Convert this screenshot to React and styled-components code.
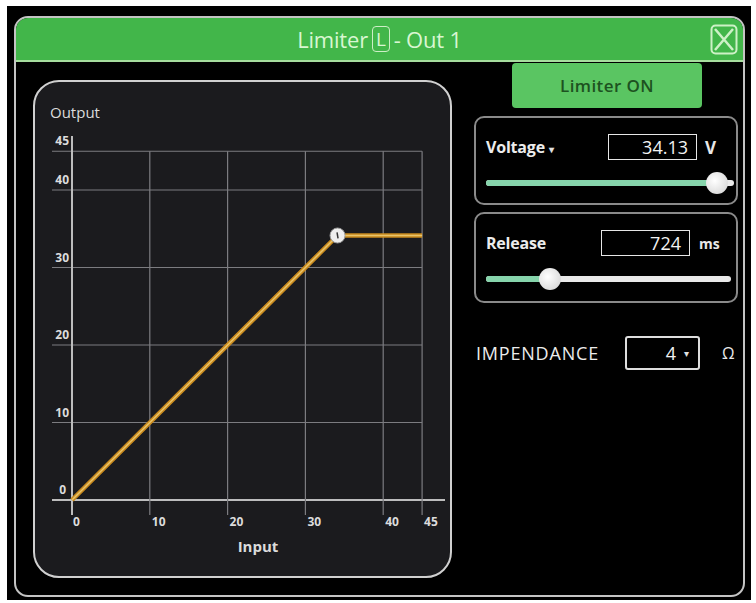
import React from "react";
import styled, { createGlobalStyle } from "styled-components";

const GlobalStyle = createGlobalStyle`
	body {
		margin: 0;
		background: #ffffff;
		font-family: "Open Sans", "Noto Sans", sans-serif;
	}
`;

const Frame = styled.div`
	margin: 6px 5px 3px 7px;
	width: 744px;
	height: 594px;
	box-sizing: border-box;
	padding: 10px 6px 3px 7px;
	background: #000;
`;

const Window = styled.div`
	width: 731px;
	height: 581px;
	box-sizing: border-box;
	border: 2px solid #c4c4c4;
	border-radius: 14px;
	overflow: hidden;
	background: #000;
	display: flex;
	flex-direction: column;
`;

const TitleBar = styled.div`
	height: 42px;
	flex-shrink: 0;
	background: #42b64a;
	border-bottom: 2px solid #a6dd9e;
	display: flex;
	align-items: center;
	justify-content: center;
	position: relative;
	color: #d9f6d2;
	font-size: 22px;
	letter-spacing: -0.2px;
`;

const KeyBox = styled.span`
	display: inline-flex;
	align-items: center;
	justify-content: center;
	height: 24px;
	padding: 0 3px;
	margin: 0 4px;
	border: 1.5px solid #cdeec6;
	border-radius: 4px;
	font-size: 19px;
`;

const CloseButton = styled.div`
	position: absolute;
	right: 5px;
	top: 6px;
	width: 28px;
	height: 31px;
`;

const Body = styled.div`
	display: flex;
	gap: 22px;
	padding-left: 17px;
`;

const ChartPanel = styled.div`
	margin-top: 18px;
	width: 419px;
	height: 498px;
	box-sizing: border-box;
	border: 2px solid #d0d0d0;
	border-radius: 26px;
	background: #1b1b1e;
	overflow: hidden;
`;

const RightColumn = styled.div`
	width: 264px;
	display: flex;
	flex-direction: column;
`;

const ToggleButton = styled.div`
	margin: 1px 0 0 38px;
	width: 190px;
	height: 45px;
	border-radius: 4px;
	background: #5ac562;
	color: #1d5220;
	font-size: 17px;
	font-weight: 600;
	letter-spacing: 0.4px;
	display: flex;
	align-items: center;
	justify-content: center;
`;

const ControlCard = styled.div`
	margin-top: ${(p) => p.$top}px;
	height: ${(p) => p.$height}px;
	box-sizing: border-box;
	border: 2px solid #8a8a8a;
	border-radius: 10px;
	padding: ${(p) => p.$padTop}px 6px 0 10px;
	display: flex;
	flex-direction: column;
`;

const ControlRow = styled.div`
	display: flex;
	align-items: center;
	height: 26px;
`;

const ControlLabel = styled.div`
	width: ${(p) => p.$width}px;
	color: #ececec;
	font-weight: 700;
	font-size: 16px;
	letter-spacing: -0.2px;
`;

const ValueBox = styled.div`
	width: 89px;
	height: 26px;
	box-sizing: border-box;
	border: 1.5px solid #e6e6e6;
	padding-right: 8px;
	color: #f2f2f2;
	font-size: 18px;
	display: flex;
	align-items: center;
	justify-content: flex-end;
`;

const Unit = styled.div`
	margin-left: ${(p) => p.$gap}px;
	color: #e8e8e8;
	font-size: ${(p) => p.$size}px;
	font-weight: ${(p) => (p.$bold ? 700 : 400)};
`;

const SliderTrack = styled.div`
	position: relative;
	margin-top: ${(p) => p.$top}px;
	width: ${(p) => p.$width}px;
	height: 6px;
	border-radius: 3px;
	background: #e9e9e9;
`;

const SliderFill = styled.div`
	height: 100%;
	border-radius: 3px;
	background: #86d4ab;
`;

const SliderThumb = styled.div`
	position: absolute;
	top: 50%;
	width: 22px;
	height: 22px;
	margin: -11px 0 0 -11px;
	border-radius: 50%;
	background: radial-gradient(circle at 40% 40%, #ffffff, #cfcfcf);
`;

const ImpedanceRow = styled.div`
	margin-top: 33px;
	display: flex;
	align-items: center;
	padding-left: 2px;
`;

const ImpedanceLabel = styled.div`
	width: 149px;
	color: #ececec;
	font-size: 18px;
	letter-spacing: 0.8px;
`;

const SelectBox = styled.div`
	width: 75px;
	height: 34px;
	box-sizing: border-box;
	border: 2px solid #dedede;
	border-radius: 3px;
	padding-right: 9px;
	color: #f2f2f2;
	font-size: 18px;
	display: flex;
	align-items: center;
	justify-content: flex-end;
	gap: 8px;
`;

const Caret = styled.span`
	font-size: 10px;
	color: #e0e0e0;
`;

const Slider = ({ value, width, top }) => (
	<SliderTrack $width={width} $top={top}>
		<SliderFill style={{ width: `${value * 100}%` }} />
		<SliderThumb style={{ left: `${value * 100}%` }} />
	</SliderTrack>
);

// chart coordinates (inside the 2px panel border)
const X0 = 37;
const Y0 = 418;
const STEP_X = 7.78;
const STEP_Y = 7.75;
const px = (v) => X0 + v * STEP_X;
const py = (v) => Y0 - v * STEP_Y;

const LimiterChart = ({ threshold }) => {
	const ticks = [0, 10, 20, 30, 40, 45];
	const labelStyle = {
		fill: "#dcdcdc",
		fontSize: 12,
		fontWeight: 700,
		fontFamily: "Open Sans, sans-serif",
	};
	const curve = `${px(0)},${py(0)} ${px(threshold)},${py(threshold)} ${px(45)},${py(threshold)}`;
	return (
		<svg width="415" height="494" viewBox="0 0 415 494">
			<text x="15" y="36" style={{ ...labelStyle, fontSize: 15, fontWeight: 400 }}>
				Output
			</text>
			{ticks.map((v) => (
				<g key={`y${v}`}>
					<line
						x1="17"
						x2={v === 0 ? 410 : px(45)}
						y1={py(v)}
						y2={py(v)}
						stroke={v === 0 ? "#bdbdbd" : "#7c7c80"}
						strokeWidth={v === 0 ? 2 : 1.2}
					/>
					<text x={v === 0 ? 31 : 34} y={py(v) - 6} textAnchor="end" style={labelStyle}>
						{v}
					</text>
				</g>
			))}
			{ticks.map((v) => (
				<g key={`x${v}`}>
					<line
						x1={px(v)}
						x2={px(v)}
						y1={v === 0 ? 54 : py(45)}
						y2={Y0 + 15}
						stroke={v === 0 ? "#bdbdbd" : "#7c7c80"}
						strokeWidth={v === 0 ? 2 : 1.2}
					/>
					<text x={px(v) + (v === 0 ? 1 : 2)} y={Y0 + 26} style={labelStyle}>
						{v}
					</text>
				</g>
			))}
			<text x="223" y="470" textAnchor="middle" style={{ ...labelStyle, fontSize: 15 }}>
				Input
			</text>
			<polyline points={curve} fill="none" stroke="#c98a1e" strokeWidth="4.5" strokeLinejoin="round" />
			<polyline points={curve} fill="none" stroke="#e9c46a" strokeWidth="1.5" strokeLinejoin="round" />
			<circle cx={px(threshold)} cy={py(threshold)} r="7.5" fill="#eeeeee" stroke="#9a9a9a" strokeWidth="1" />
			<line
				x1={px(threshold) - 0.5}
				x2={px(threshold) + 0.5}
				y1={py(threshold) - 3}
				y2={py(threshold) + 3}
				stroke="#333"
				strokeWidth="1.5"
			/>
		</svg>
	);
};

const App = () => {
	return (
		<>
			<GlobalStyle />
			<Frame>
				<Window>
					<TitleBar>
						Limiter<KeyBox>L</KeyBox>- Out 1
						<CloseButton>
							<svg width="28" height="31" viewBox="0 0 28 31">
								<rect x="1.5" y="1.5" width="25" height="28" rx="4" fill="none" stroke="#cdf1c6" strokeWidth="2" />
								<path d="M5 5 L23 26 M23 5 L5 26" stroke="#cdf1c6" strokeWidth="2.5" />
							</svg>
						</CloseButton>
					</TitleBar>
					<Body>
						<ChartPanel>
							<LimiterChart threshold={34.13} />
						</ChartPanel>
						<RightColumn>
							<ToggleButton>Limiter ON</ToggleButton>
							<ControlCard $top={8} $height={89} $padTop={16}>
								<ControlRow>
									<ControlLabel $width={122}>
										Voltage <Caret>▾</Caret>
									</ControlLabel>
									<ValueBox>34.13</ValueBox>
									<Unit $gap={8} $size={17} $bold>
										V
									</Unit>
								</ControlRow>
								<Slider value={0.93} width={248} top={20} />
							</ControlCard>
							<ControlCard $top={7} $height={91} $padTop={16}>
								<ControlRow>
									<ControlLabel $width={115}>Release</ControlLabel>
									<ValueBox>724</ValueBox>
									<Unit $gap={9} $size={14} $bold>
										ms
									</Unit>
								</ControlRow>
								<Slider value={0.26} width={245} top={20} />
							</ControlCard>
							<ImpedanceRow>
								<ImpedanceLabel>IMPENDANCE</ImpedanceLabel>
								<SelectBox>
									4 <Caret>▾</Caret>
								</SelectBox>
								<Unit $gap={22} $size={16}>
									Ω
								</Unit>
							</ImpedanceRow>
						</RightColumn>
					</Body>
				</Window>
			</Frame>
		</>
	);
};

export default App;
